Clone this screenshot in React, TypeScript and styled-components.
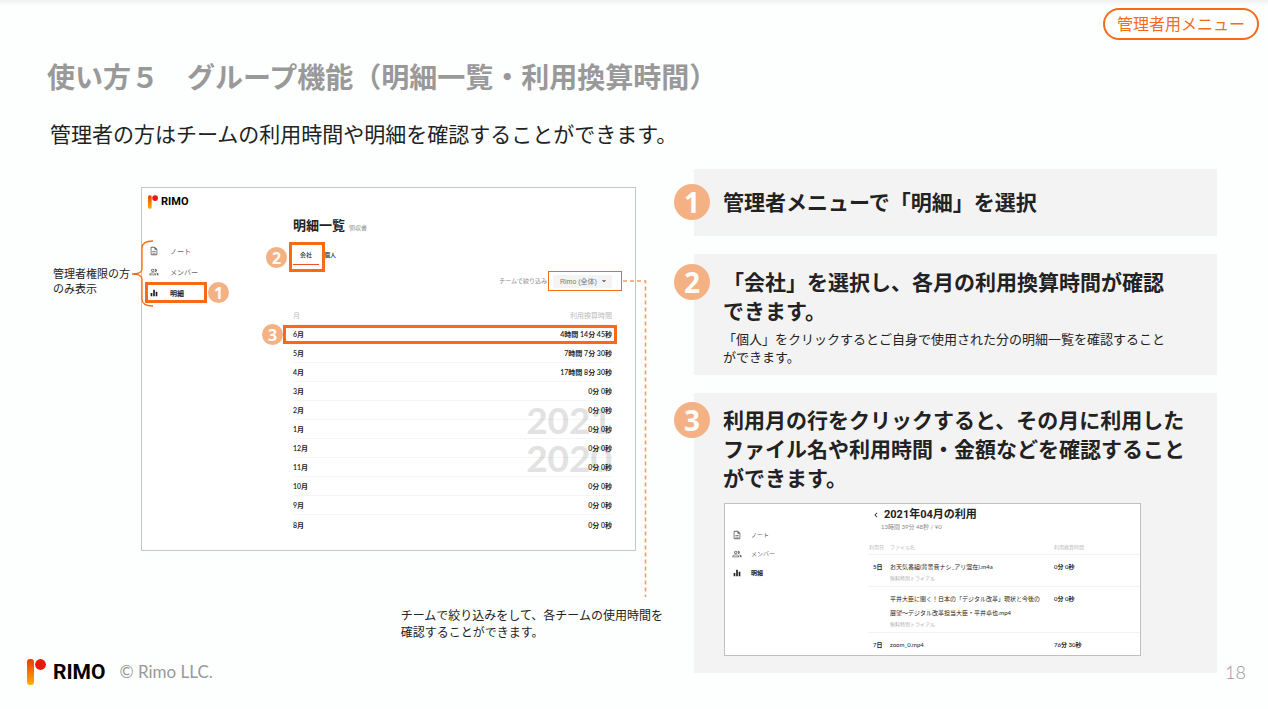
import React from "react";
import styled, { createGlobalStyle, css } from "styled-components";
import {
  MdArrowDropDown,
  MdChevronLeft,
  MdEqualizer,
  MdOutlineDescription,
  MdOutlinePeopleAlt,
} from "react-icons/md";

const orange = "#f96a17";
const peach = "#f4b183";
const ink = "#222222";

const GlobalStyle = createGlobalStyle`
  *, *::before, *::after { box-sizing: border-box; }
  body {
    margin: 0;
    background: #fdfefe;
    color: ${ink};
    font-family: "Noto Sans CJK JP", sans-serif;
  }
  h1, h2, h3, p, ul, ol { margin: 0; padding: 0; }
  ul, ol { list-style: none; }
  a { color: inherit; text-decoration: none; }
  button, select { font: inherit; color: inherit; }
  svg { display: block; flex: none; }
`;

/* ---------- slide ---------- */

const Slide = styled.main`
  display: flex;
  flex-direction: column;
  min-height: 100vh;
  background: linear-gradient(#f0f1f1, #fdfefe 6px);
`;

const TopBar = styled.header`
  display: flex;
  justify-content: flex-end;
  padding: 8px 9px 0;
`;

const MenuPill = styled.span`
  padding: 0 12px 1px;
  border: 2px solid ${orange};
  border-radius: 16px;
  color: ${orange};
  background: #fff;
  font-size: 16px;
  line-height: 27px;
`;

const Title = styled.h1`
  margin: 18px 47px 0;
  color: #999;
  font-size: 28px;
  font-weight: 700;
  line-height: 36px;
`;

const Lead = styled.p`
  margin: 24px 50px 0;
  font-size: 21px;
  line-height: 30px;
`;

const Body = styled.div`
  display: grid;
  grid-template-columns: 694fr 523fr 51px;
  margin-top: 21px;
`;

const FigureColumn = styled.section`
  display: flex;
  flex-direction: column;
  min-width: 0;
  padding-top: 18px;
`;

const FigureRow = styled.div`
  display: flex;
  margin-right: 58px;
`;

const SideNote = styled.p`
  flex: none;
  width: 141px;
  padding: 79px 0 0 53px;
  font-size: 11px;
  line-height: 15px;
  white-space: nowrap;
`;

const Caption = styled.p`
  align-self: flex-end;
  margin: 55px 31px 0 0;
  font-size: 12px;
  line-height: 17px;
`;

const Footer = styled.footer`
  display: flex;
  align-items: center;
  gap: 14px;
  height: 26px;
  margin-top: auto;
  padding-left: 27px;
`;

const Copyright = styled.small`
  color: #999;
  font-family: Lato, sans-serif;
  font-size: 17px;
  line-height: 26px;
`;

const PageNumber = styled.span`
  align-self: end;
  padding-left: 8px;
  color: #999;
  font-family: Lato, sans-serif;
  font-size: 18px;
  font-weight: 300;
  line-height: 26px;
`;

/* ---------- brand ---------- */

const BrandBox = styled.span<{ $small?: boolean }>`
  display: flex;
  align-items: center;
  gap: ${(p) => (p.$small ? 3 : 7)}px;
  color: #000;
  font-family: Roboto, sans-serif;
  font-size: ${(p) => (p.$small ? 11 : 21)}px;
  font-weight: 700;
  line-height: ${(p) => (p.$small ? 14 : 26)}px;
`;

function Brand({ small }: { small?: boolean }) {
  const id = small ? "flame-small" : "flame";
  return (
    <BrandBox $small={small}>
      <svg width={small ? 10 : 19} height={small ? 14 : 26} viewBox="0 0 19 26" aria-hidden="true">
        <defs>
          <linearGradient id={id} x1="0" y1="0" x2="0" y2="1">
            <stop offset="0" stopColor="#ea3a0c" />
            <stop offset="1" stopColor="#ffb000" />
          </linearGradient>
        </defs>
        <rect x="0" y="0" width="7" height="26" rx="3" fill={`url(#${id})`} />
        <circle cx="13.5" cy="5.5" r="5.4" fill="#e61a08" />
      </svg>
      RIMO
    </BrandBox>
  );
}

/* ---------- markers ---------- */

const Badge = styled.span<{ $large?: boolean }>`
  position: absolute;
  display: flex;
  align-items: center;
  justify-content: center;
  width: ${(p) => (p.$large ? 36 : 21)}px;
  height: ${(p) => (p.$large ? 36 : 21)}px;
  border-radius: 50%;
  background: ${peach};
  color: #fff;
  font-family: "Noto Sans", sans-serif;
  font-size: ${(p) => (p.$large ? 28 : 16)}px;
  font-weight: 700;
  line-height: 1;
`;

const Overlay = styled.svg`
  position: absolute;
  z-index: 3;
  overflow: visible;
  pointer-events: none;
`;

const BracketLine = styled(Overlay)`
  top: 52px;
  left: -11px;
`;

const DashedLine = styled(Overlay)`
  top: 92px;
  right: -12px;
`;

/* ---------- product window ---------- */

const AppWindow = styled.div`
  position: relative;
  display: flex;
  flex: 1;
  min-width: 0;
  border: 1px solid #c4c6c6;
  background: #fff;
`;

const AppSide = styled.div`
  flex: none;
  width: 151px;
  padding: 7px 0 0 3px;
`;

const AppBrand = styled.div`
  margin: 0 0 31px 3px;
`;

const NavItem = styled.li`
  position: relative;
`;

const NavLink = styled.a<{ $active?: boolean; $marked?: boolean; $tight?: boolean }>`
  display: flex;
  align-items: center;
  gap: ${(p) => (p.$tight ? 9 : 11)}px;
  width: 62px;
  height: ${(p) => (p.$tight ? 19 : 21)}px;
  padding-left: 1px;
  border: 3px solid ${(p) => (p.$marked ? orange : "transparent")};
  color: ${(p) => (p.$active ? ink : "#666")};
  font-size: ${(p) => (p.$tight ? 6 : 7)}px;
  font-weight: ${(p) => (p.$active ? 700 : 400)};
  white-space: nowrap;
`;

const NavBadge = styled(Badge)`
  top: 0;
  left: 63px;
`;

const AppMain = styled.div`
  flex: 1;
  min-width: 0;
  padding: 28px 23px 16px 0;
`;

const AppHeading = styled.div`
  display: flex;
  align-items: baseline;
  gap: 4px;
  height: 18px;

  h2 {
    font-size: 13px;
    font-weight: 700;
    line-height: 18px;
  }
  a {
    color: #999;
    font-size: 6px;
    line-height: 8px;
  }
`;

const Tabs = styled.div`
  position: relative;
  display: flex;
  margin: 8px 0 0 -4px;
`;

const Tab = styled.button<{ $active?: boolean }>`
  position: relative;
  height: 30px;
  padding: 0 0 4px;
  border: 0;
  background: none;
  font-size: 6px;
  font-weight: 500;
  line-height: 8px;

  ${(p) =>
    p.$active
      ? css`
          z-index: 1;
          width: 36px;
          padding: 0 2px 4px 0;
          border: 3px solid ${orange};

          &::after {
            content: "";
            position: absolute;
            right: 3px;
            bottom: 4px;
            left: 1px;
            border-bottom: 1px solid #f0502a;
          }
        `
      : css`
          margin-left: -1px;
        `}
`;

const TabBadge = styled(Badge)`
  top: 5px;
  left: -23px;
`;

const FilterRow = styled.div`
  display: flex;
  align-items: center;
  justify-content: flex-end;
  gap: 1px;
  margin: -1px -10px 0 0;
  color: #888;
  font-size: 6px;
  line-height: 8px;
`;

const FilterBox = styled.div`
  position: relative;
  display: flex;
  align-items: center;
  height: 20px;
  padding: 0 9px 0 4px;
  border: 1px solid ${orange};

  svg {
    position: absolute;
    right: 12px;
  }
`;

const TeamSelect = styled.select`
  width: 59px;
  height: 13px;
  padding: 0 0 0 7px;
  border: 0;
  border-radius: 1px;
  background: #f4f4f4;
  color: #777;
  appearance: none;
  font-family: "Liberation Sans", "Noto Sans CJK JP", sans-serif;
  font-size: 7px;
  line-height: 13px;
`;

const UsageArea = styled.div`
  position: relative;
  margin-top: 15px;
`;

const Years = styled.div`
  position: absolute;
  top: 95px;
  right: 0;
  color: #e2e2e2;
  font-family: Lato, sans-serif;
  font-size: 37px;
  font-weight: 700;
  line-height: 38px;
`;

const UsageTable = styled.table`
  position: relative;
  width: 100%;
  border-collapse: separate;
  border-spacing: 0;
  font-family: Lato, "Noto Sans CJK JP", sans-serif;
  font-size: 7px;
  line-height: 8px;

  th,
  td {
    height: 19px;
    padding: 0;
    border-bottom: 1px solid rgba(0, 0, 0, 0.04);
    font-weight: 600;
    text-align: left;
  }
  th {
    color: #bbb;
    font-weight: 400;
  }
  th:last-child,
  td:last-child {
    text-align: right;
  }
  tr:last-child td {
    border-bottom: 0;
  }
`;

const UsageRow = styled.tr`
  position: relative;
`;

const RowMarker = styled.span`
  position: absolute;
  inset: 0 -5px 0 -10px;
  border: 3px solid ${orange};
`;

const RowBadge = styled(Badge)`
  top: -1px;
  left: -31px;
`;

/* ---------- steps ---------- */

const Steps = styled.ol`
  display: flex;
  flex-direction: column;
  gap: 18px;
  min-width: 0;
  padding-bottom: 12px;
`;

const Step = styled.li<{ $top: number; $bottom: number }>`
  position: relative;
  padding: ${(p) => p.$top}px 0 ${(p) => p.$bottom}px 29px;
  background: #f3f3f3;
`;

const StepTitle = styled.h3`
  position: relative;
  font-size: 21px;
  font-weight: 700;
  line-height: 29px;
`;

const StepBadge = styled(Badge)`
  top: -3px;
  left: -49px;
`;

const StepText = styled.p`
  margin-top: 5px;
  font-size: 13px;
  line-height: 18px;
`;

/* ---------- detail window ---------- */

const DetailWindow = styled.div`
  display: flex;
  margin: 11px 76px 0 1px;
  border: 1px solid #c0c0c0;
  background: #fff;
`;

const DetailSide = styled.div`
  flex: none;
  width: 143px;
  padding: 21px 0 0 3px;
`;

const DetailMain = styled.div`
  flex: 1;
  min-width: 0;
  padding-top: 3px;
`;

const DetailHeading = styled.div`
  display: flex;
  align-items: center;
  gap: 3px;
  padding-left: 3px;
  font-family: Roboto, "Noto Sans CJK JP", sans-serif;
  font-size: 11px;
  font-weight: 700;
  line-height: 15px;
`;

const DetailTotal = styled.p`
  padding-left: 13px;
  color: #888;
  font-family: Lato, "Noto Sans CJK JP", sans-serif;
  font-size: 6px;
  line-height: 10px;
`;

const DetailTable = styled.table`
  width: 100%;
  margin-top: 8px;
  border-collapse: separate;
  border-spacing: 0;
  table-layout: fixed;
  font-family: Lato, "Noto Sans CJK JP", sans-serif;
  font-size: 6px;
  line-height: 14px;

  th {
    height: 15px;
    padding: 0;
    border-bottom: 1px solid #f3f3f3;
    color: #bbb;
    font-size: 5px;
    font-weight: 400;
    text-align: left;
  }
  td {
    padding: 5px 0 3px;
    border-bottom: 1px solid #f3f3f3;
    vertical-align: top;
    white-space: nowrap;
  }
  th:first-child {
    width: 22px;
    padding-left: 1px;
  }
  td:first-child {
    padding-left: 5px;
    font-weight: 600;
  }
  th:nth-child(2) {
    width: 164px;
  }
  td:last-child {
    font-weight: 600;
  }
  tr:last-child td {
    border-bottom: 0;
  }
`;

const Plan = styled.div`
  color: #aaa;
  font-size: 5px;
  line-height: 9px;
`;

/* ---------- content ---------- */

const usage = [
  ["6月", "4時間 14分 45秒"],
  ["5月", "7時間 7分 30秒"],
  ["4月", "17時間 8分 30秒"],
  ["3月", "0分 0秒"],
  ["2月", "0分 0秒"],
  ["1月", "0分 0秒"],
  ["12月", "0分 0秒"],
  ["11月", "0分 0秒"],
  ["10月", "0分 0秒"],
  ["9月", "0分 0秒"],
  ["8月", "0分 0秒"],
];

const files = [
  { day: "5日", name: ["お天気番組(背景音ナシ_アリ混在).m4a"], plan: "無料特別トライアル", time: "0分 0秒" },
  {
    day: "",
    name: ["平井大臣に聞く！日本の「デジタル改革」現状と今後の", "展望〜デジタル改革担当大臣・平井卓也.mp4"],
    plan: "無料特別トライアル",
    time: "0分 0秒",
  },
  { day: "7日", name: ["zoom_0.mp4"], plan: "", time: "76分 30秒" },
];

function SideNav({ marked }: { marked?: boolean }) {
  return (
    <nav>
      <ul>
        <NavItem>
          <NavLink href="#notes" $tight={!marked}>
            <MdOutlineDescription size={10} />
            ノート
          </NavLink>
        </NavItem>
        <NavItem>
          <NavLink href="#members" $tight={!marked}>
            <MdOutlinePeopleAlt size={10} />
            メンバー
          </NavLink>
        </NavItem>
        <NavItem>
          <NavLink href="#usage" $active $marked={marked} $tight={!marked}>
            <MdEqualizer size={10} />
            明細
          </NavLink>
          {marked && <NavBadge>1</NavBadge>}
        </NavItem>
      </ul>
    </nav>
  );
}

function UsageWindow() {
  return (
    <AppWindow>
      <AppSide>
        <AppBrand>
          <Brand small />
        </AppBrand>
        <SideNav marked />
      </AppSide>
      <AppMain>
        <AppHeading>
          <h2>明細一覧</h2>
          <a href="#receipt">領収書</a>
        </AppHeading>
        <Tabs>
          <Tab type="button" $active>
            会社
          </Tab>
          <Tab type="button">個人</Tab>
          <TabBadge>2</TabBadge>
        </Tabs>
        <FilterRow>
          <label htmlFor="team">チームで絞り込み</label>
          <FilterBox>
            <TeamSelect id="team" defaultValue="all">
              <option value="all">Rimo (全体)</option>
            </TeamSelect>
            <MdArrowDropDown size={10} color="#555" />
          </FilterBox>
        </FilterRow>
        <UsageArea>
          <Years aria-hidden="true">
            2021
            <br />
            2020
          </Years>
          <UsageTable>
            <thead>
              <tr>
                <th>月</th>
                <th>利用換算時間</th>
              </tr>
            </thead>
            <tbody>
              {usage.map(([month, time], i) => (
                <UsageRow key={month}>
                  <td>
                    {month}
                    {i === 0 && (
                      <>
                        <RowMarker />
                        <RowBadge>3</RowBadge>
                      </>
                    )}
                  </td>
                  <td>{time}</td>
                </UsageRow>
              ))}
            </tbody>
          </UsageTable>
        </UsageArea>
      </AppMain>
      <BracketLine width="22" height="67" viewBox="0 0 22 67" fill="none" stroke={orange} strokeWidth="1.3">
        <path d="M22 1C15 1 11 3 11 8V29C11 32 7 34 1 34C7 34 11 36 11 39V59C11 64 15 66 22 66" />
      </BracketLine>
      <DashedLine width="26" height="318" viewBox="0 0 26 318" fill="none" stroke="#f99d66" strokeWidth="1.6">
        <path d="M2 1H24.5V317" strokeDasharray="4 3" />
      </DashedLine>
    </AppWindow>
  );
}

function DetailView() {
  return (
    <DetailWindow>
      <DetailSide>
        <SideNav />
      </DetailSide>
      <DetailMain>
        <DetailHeading>
          <MdChevronLeft size={10} />
          2021年04月の利用
        </DetailHeading>
        <DetailTotal>13時間 39分 48秒 / ¥0</DetailTotal>
        <DetailTable>
          <thead>
            <tr>
              <th>利用日</th>
              <th>ファイル名</th>
              <th>利用換算時間</th>
            </tr>
          </thead>
          <tbody>
            {files.map((file) => (
              <tr key={file.name[0]}>
                <td>{file.day}</td>
                <td>
                  {file.name.map((line) => (
                    <div key={line}>{line}</div>
                  ))}
                  {file.plan && <Plan>{file.plan}</Plan>}
                </td>
                <td>{file.time}</td>
              </tr>
            ))}
          </tbody>
        </DetailTable>
      </DetailMain>
    </DetailWindow>
  );
}

export default function App() {
  return (
    <>
      <GlobalStyle />
      <Slide lang="ja">
        <TopBar>
          <MenuPill>管理者用メニュー</MenuPill>
        </TopBar>
        <Title>使い方５　グループ機能（明細一覧・利用換算時間）</Title>
        <Lead>管理者の方はチームの利用時間や明細を確認することができます。</Lead>
        <Body>
          <FigureColumn>
            <FigureRow>
              <SideNote>
                管理者権限の方
                <br />
                のみ表示
              </SideNote>
              <UsageWindow />
            </FigureRow>
            <Caption>
              チームで絞り込みをして、各チームの使用時間を
              <br />
              確認することができます。
            </Caption>
            <Footer>
              <Brand />
              <Copyright>© Rimo LLC.</Copyright>
            </Footer>
          </FigureColumn>
          <Steps>
            <Step $top={18} $bottom={20}>
              <StepTitle>
                <StepBadge $large>1</StepBadge>
                管理者メニューで「明細」を選択
              </StepTitle>
            </Step>
            <Step $top={13} $bottom={9}>
              <StepTitle>
                <StepBadge $large>2</StepBadge>
                「会社」を選択し、各月の利用換算時間が確認
                <br />
                できます。
              </StepTitle>
              <StepText>
                「個人」をクリックするとご自身で使用された分の明細一覧を確認すること
                <br />
                ができます。
              </StepText>
            </Step>
            <Step $top={12} $bottom={17}>
              <StepTitle>
                <StepBadge $large>3</StepBadge>
                利用月の行をクリックすると、その月に利用した
                <br />
                ファイル名や利用時間・金額などを確認すること
                <br />
                ができます。
              </StepTitle>
              <DetailView />
            </Step>
          </Steps>
          <PageNumber>18</PageNumber>
        </Body>
      </Slide>
    </>
  );
}
